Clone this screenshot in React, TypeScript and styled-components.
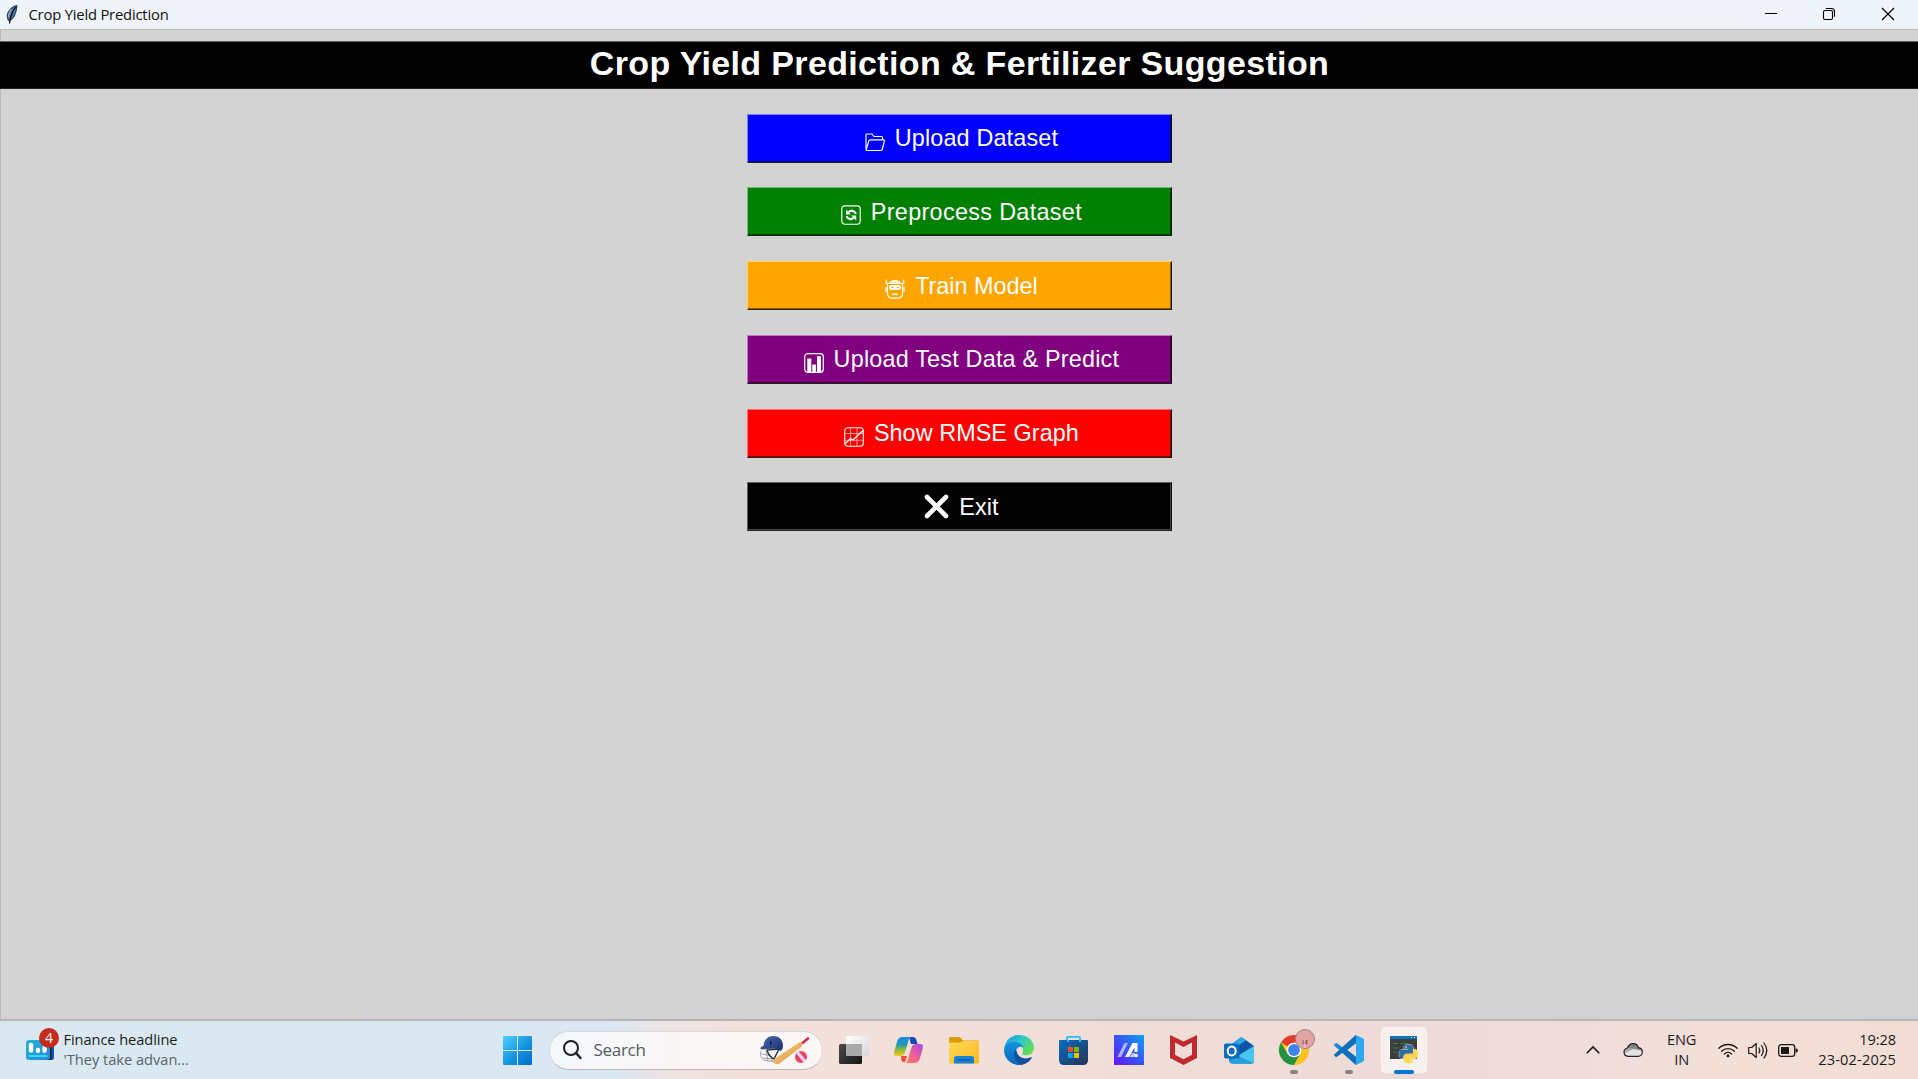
import React from 'react';
import styled, { createGlobalStyle } from 'styled-components';

const GlobalStyle = createGlobalStyle`
  * { box-sizing: border-box; }
  html, body { margin: 0; padding: 0; overflow: hidden; }
  svg { display: block; flex: none; overflow: visible; }
`;

const uiFont = `"Open Sans", "Noto Sans", sans-serif`;
const tkFont = `"Liberation Sans", Arial, sans-serif`;

const Desktop = styled.div`
  width: 1918px;
  height: 1079px;
  display: flex;
  flex-direction: column;
  font-family: ${uiFont};
`;

const TitleBar = styled.header`
  height: 29px;
  flex: none;
  display: flex;
  align-items: center;
  padding-left: 6px;
  background: linear-gradient(90deg, #eff3fa 0%, #eff3f9 60%, #eef3f7 88%, #eff3fa 94%);
`;

const WindowTitle = styled.span`
  margin-left: 10.5px;
  padding-bottom: 1px;
  flex: 1;
  font-size: 14.8px;
  line-height: 20px;
  letter-spacing: -0.2px;
  color: #111;
`;

const CaptionButton = styled.button`
  width: 58.7px;
  height: 29px;
  padding: 0 1px 1px 0;
  border: 0;
  background: transparent;
  display: flex;
  align-items: center;
  justify-content: center;
`;

const Client = styled.main`
  flex: 1;
  min-height: 0;
  display: flex;
  flex-direction: column;
  padding-top: 11px;
  background: #d3d3d3;
  border-top: 1px solid #b9bcc1;
  border-bottom: 2px solid #b7b5b7;
  box-shadow: inset 1px 0 #b9b9b9;
`;

const Heading = styled.h1`
  margin: 0;
  flex: none;
  height: 48px;
  padding: 0 0 3px 1px;
  display: flex;
  align-items: center;
  justify-content: center;
  background: #000;
  border-top: 1px solid #666;
  border-bottom: 1px solid #222;
  color: #fff;
  font: bold 34px/43px ${tkFont};
  letter-spacing: 0.35px;
  white-space: pre;
`;

const ButtonStack = styled.nav`
  display: flex;
  flex-direction: column;
  align-items: center;
  gap: 24.75px;
  padding-top: 24.7px;
`;

const TkButton = styled.button<{ $fill: string; $light: string; $dark: string; $track: number }>`
  width: 425px;
  height: 49px;
  padding: 0 0 0 5px;
  display: flex;
  align-items: center;
  justify-content: center;
  gap: 9.8px;
  background: ${p => p.$fill};
  color: #fff;
  border: 1px solid;
  border-color: ${p => p.$light} #111 #222 ${p => p.$light};
  box-shadow: inset -1px -1px ${p => p.$dark};
  font: 23.4px/30px ${tkFont};
  letter-spacing: ${p => p.$track}px;
  white-space: pre;
`;

const Glyph = styled.span<{ $drop: number }>`
  display: flex;
  padding-top: ${p => p.$drop}px;
`;

const Taskbar = styled.footer`
  height: 58px;
  flex: none;
  display: flex;
  align-items: center;
  background: linear-gradient(90deg, #d9e8f1 0%, #d9e8f1 15%, #dbe8f4 32%, #efe3e2 35%, #f3e1da 39%, #efded7 60%, #eddad8 73%, #f0dcdb 82%, #f3dfd7 89%, #f2ddd5 100%);
`;

const Widget = styled.div`
  width: 490px;
  display: flex;
  align-items: center;
  padding: 0 0 1px 26px;
`;

const WidgetIcon = styled.div`
  position: relative;
  width: 28px;
  height: 20px;
`;

const Badge = styled.span`
  position: absolute;
  left: 13px;
  top: -12px;
  width: 20px;
  height: 20px;
  border-radius: 50%;
  background: #c42b1c;
  color: #fff;
  font-size: 14px;
  line-height: 20px;
  text-align: center;
`;

const WidgetText = styled.div`
  display: flex;
  flex-direction: column;
  margin-left: 9.5px;
  padding-bottom: 1px;
  font-size: 14.6px;
  line-height: 20px;
`;

const Line = styled.span<{ $tone?: string; $track: number }>`
  color: ${p => p.$tone || '#1b1b1b'};
  letter-spacing: ${p => p.$track}px;
  white-space: pre;
`;

const Slot = styled.div`
  position: relative;
  width: 55px;
  height: 58px;
  flex: none;
  display: flex;
  align-items: center;
  justify-content: center;
`;

const ActiveTile = styled.div`
  width: 48px;
  height: 48px;
  display: flex;
  align-items: center;
  justify-content: center;
  border-radius: 5px;
  background: #f8f0ee;
  border: 1px solid #eadfdd;
`;

const Indicator = styled.i<{ $active?: boolean }>`
  position: absolute;
  bottom: 5px;
  left: 50%;
  width: ${p => (p.$active ? 20 : 8)}px;
  height: 4px;
  transform: translateX(-50%);
  border-radius: 2px;
  background: ${p => (p.$active ? '#0078d4' : '#8c807e')};
`;

const SearchBox = styled.div`
  width: 274px;
  height: 39px;
  margin: 0 3.5px;
  padding: 0 13px 0 13px;
  flex: none;
  display: flex;
  align-items: center;
  border-radius: 20px;
  background: linear-gradient(90deg, #f4f8fc, #faf6f6 45%, #fcf7f5);
  border: 1px solid #dcd8da;
  border-bottom-color: #c0b8b8;
`;

const SearchText = styled.span`
  flex: 1;
  margin-left: 12px;
  font-size: 17px;
  line-height: 24px;
  letter-spacing: -0.3px;
  color: #555a5e;
`;

const Tray = styled.div`
  flex: 1;
  display: flex;
  align-items: center;
  justify-content: flex-end;
  padding-right: 22px;
`;

const TrayIcon = styled.span<{ $gap: number }>`
  display: flex;
  margin-right: ${p => p.$gap}px;
`;

const TrayText = styled.div<{ $align: string; $gap?: number }>`
  display: flex;
  flex-direction: column;
  align-items: ${p => p.$align};
  margin-right: ${p => p.$gap || 0}px;
  padding-bottom: 2px;
  font-size: 14.6px;
  line-height: 20px;
`;

const Feather = () => (
  <svg width="12" height="20" viewBox="0 0 12 20">
    <path d="M10.8.7C7 1 2.3 5 1.2 10.5l.8 4 1.3 1.2c4-2 7-6.500 7.5-15z" fill="#4a86cc" stroke="#33383f" strokeWidth="1.200" />
    <path d="M10 2C6.500 5 4.500 9 3.500 18.500M7 6.500 4.500 13" stroke="#111" strokeWidth="1.300" fill="none" />
    <path d="M5 4.500C3.300 7 2.500 9 2.300 12" stroke="#aab4c0" strokeWidth="1.100" fill="none" />
  </svg>
);

const FolderGlyph = () => (
  <svg width="20" height="19" viewBox="0 0 20 19" fill="none" stroke="#fff" strokeWidth="1.150" strokeLinejoin="round">
    <path d="M1 16V2q0-1 1-1h5l2 2.500h7.500q1 0 1 1v2.300" />
    <path d="M5.500 6.800h13.300q.8 0 .6.900l-2 8.300q-.4 1.500-1.800 1.500H2.200Q.9 17.500 1.300 16l2.500-8q.4-1.200 1.700-1.200z" />
  </svg>
);

const RefreshGlyph = () => (
  <svg width="20" height="20" viewBox="0 0 20 20" fill="none" stroke="#fff">
    <rect x=".8" y=".8" width="18.400" height="18.400" rx="3" strokeWidth="1.150" />
    <path d="M7.500 7.300c2-2.300 6-2 7.500 1.500M12.500 12.700c-2 2.300-5.500 1.800-7-1.500" strokeWidth="2.100" />
    <path d="M5 4.500v5h5zM15.200 15.500v-5h-5z" fill="#fff" stroke="none" />
  </svg>
);

const RobotGlyph = () => (
  <svg width="20" height="20" viewBox="0 0 20 20" fill="none" stroke="#fff" strokeWidth="1.200">
    <path d="M1.300.5v4.500M18.700.5v4.500" />
    <path d="M6 2.800q4-3 8 0z" fill="#fff" />
    <path d="M1.300 4.300h17.400" />
    <path d="M2.500 5v9.500q.3 4.700 5 4.700h5q4.700 0 5-4.700V5" />
    <path d="M1 8v5M19 8v5" />
    <rect x="4" y="6" width="12" height="5" rx="2.400" fill="#fff" stroke="none" />
    <path d="M6.300 8.500h2M11.700 8.500h2" stroke="#ffa500" strokeWidth="1.500" />
    <path d="M7.300 15.300h5.400" strokeWidth="1.700" />
  </svg>
);

const BarsGlyph = () => (
  <svg width="20" height="20" viewBox="0 0 20 20">
    <rect x=".7" y=".7" width="18.600" height="18.600" rx="3" fill="none" stroke="#fff" strokeWidth="1.200" />
    <path d="M3.300 19V5.500h4V19zM8.300 19v-7.500h3.600V19zM13 19V3.300h4V19z" fill="#fff" />
  </svg>
);

const GraphGlyph = () => (
  <svg width="20" height="20" viewBox="0 0 20 20" fill="none" stroke="#fff">
    <rect x=".7" y=".7" width="18.600" height="18.600" rx="3" strokeWidth="1.100" />
    <path d="M6.500 1v18M13 1v18M1 6.500h18M1 13.300h18" strokeWidth=".8" opacity=".7" />
    <path d="M1.500 16.500 6.500 11.500l2.500 1.500 10-9.500" strokeWidth="1.300" />
  </svg>
);

const CrossGlyph = () => (
  <svg width="25" height="25" viewBox="0 0 25 25" stroke="#fff" strokeWidth="4.600" strokeLinecap="round">
    <path d="M3 3l19 19M22 3 3 22" />
  </svg>
);

const actions = [
  { label: 'Upload Dataset', fill: '#0000ff', light: '#7f7fff', dark: '#00008c', drop: 8, track: 0.15, Icon: FolderGlyph },
  { label: 'Preprocess Dataset', fill: '#008000', light: '#72bb78', dark: '#004600', drop: 7, track: 0.32, Icon: RefreshGlyph },
  { label: 'Train Model', fill: '#ffa500', light: '#ffd45e', dark: '#8c5a00', drop: 7, track: -0.02, Icon: RobotGlyph },
  { label: 'Upload Test Data & Predict', fill: '#800080', light: '#bd75bd', dark: '#460046', drop: 7, track: 0.2, Icon: BarsGlyph },
  { label: 'Show RMSE Graph', fill: '#ff0000', light: '#ff6f6f', dark: '#8c0000', drop: 7, track: 0.06, Icon: GraphGlyph },
  { label: 'Exit', fill: '#000000', light: '#606060', dark: '#444444', drop: 0, track: 0.1, Icon: CrossGlyph },
];

const WidgetChart = () => (
  <svg width="28" height="20" viewBox="0 0 28 20">
    <defs>
      <linearGradient id="wg" x1="0" y1="0" x2="1" y2="1"><stop stopColor="#23b5cf" /><stop offset="1" stopColor="#2b84dc" /></linearGradient>
    </defs>
    <rect x="18" width="10" height="20" rx="2.500" fill="#1458a8" />
    <rect x="23.500" y="6" width="2" height="14" fill="#07203e" />
    <rect width="24" height="20" rx="3" fill="url(#wg)" />
    <path d="M5 5v5.500M12 10v.8M18.500 8v2.800" stroke="#fff" strokeWidth="4.400" strokeLinecap="round" />
    <path d="M3.500 16h17" stroke="#25dcf5" strokeWidth="2" strokeLinecap="round" />
  </svg>
);

const WindowsLogo = () => (
  <svg width="29" height="29" viewBox="0 0 29 29">
    <defs>
      <linearGradient id="win" x1="0" y1="0" x2="1" y2="1"><stop stopColor="#4fd0fb" /><stop offset=".55" stopColor="#1594dd" /><stop offset="1" stopColor="#0069c8" /></linearGradient>
    </defs>
    <path d="M1 0h13v14H0V1q0-1 1-1zM15 0h13q1 0 1 1v13H15zM0 15h14v14H1q-1 0-1-1zM15 15h14v13q0 1-1 1H15z" fill="url(#win)" />
  </svg>
);

const Magnifier = () => (
  <svg width="19" height="20" viewBox="0 0 19 20" fill="none" stroke="#1f1f1f" strokeLinecap="round">
    <circle cx="8" cy="8" r="7" strokeWidth="2" />
    <path d="M13 13l4.500 5" strokeWidth="2.500" />
  </svg>
);

const CricketArt = () => (
  <svg width="50" height="30" viewBox="0 0 50 30">
    <defs>
      <linearGradient id="bat" x1="0" y1="0" x2="1" y2="1"><stop stopColor="#f8c98a" /><stop offset="1" stopColor="#e39a3f" /></linearGradient>
      <linearGradient id="helm" x1="0" y1="0" x2="1" y2="1"><stop stopColor="#4c6cb0" /><stop offset="1" stopColor="#172f70" /></linearGradient>
    </defs>
    <path d="M2 16c-1 4 0 8 4 9.500l9 1M3 19l10 2M4 23l11 1M7 15l2 11M12 14l1 12" stroke="#9a9fa6" strokeWidth="1" fill="none" />
    <path d="M8 15q2 7 7 9l5-10z" fill="#eceef1" stroke="#252a33" strokeWidth="1.300" />
    <path d="M4.500 11C5 4 9.500 1 14.500 1 20 1 24 5 24 10.500c0 3-1 5-2.500 5.500C17 12.500 10 14 2.500 14.500.5 13.800 1 12 4.500 11z" fill="url(#helm)" />
    <path d="M12 6q-1 2 0 4" stroke="#0b1430" strokeWidth="1.500" fill="none" />
    <path d="M43.500 8 49 3.500" stroke="#d72846" strokeWidth="2.600" strokeLinecap="round" />
    <path d="M14.500 24.500 39 8.200q3-2 4.500.3 0 2.500-2 4L20 29q-3.500 1-5.500-1.500-1-2 0-3z" fill="url(#bat)" />
    <circle cx="42" cy="22" r="6" fill="#f04363" />
    <path d="m38.500 17.500 7.500 9" stroke="#ead7f6" strokeWidth="3.200" />
  </svg>
);

const TaskView = () => (
  <svg width="30" height="28" viewBox="0 0 30 28">
    <defs>
      <linearGradient id="tvd" x1="0" y1="0" x2="1" y2="1"><stop stopColor="#4a4a4a" /><stop offset="1" stopColor="#151515" /></linearGradient>
      <linearGradient id="tvl" x1="0" y1="0" x2="1" y2="1"><stop stopColor="#fff" /><stop offset="1" stopColor="#d8d5d5" /></linearGradient>
    </defs>
    <rect x="7" width="23" height="20" rx="1.500" fill="url(#tvl)" />
    <rect y="8" width="23" height="20" rx="1.500" fill="url(#tvd)" />
    <path d="M7 8h16v12H8q-1 0-1-1z" fill="#aaa" />
  </svg>
);

const Copilot = () => (
  <svg width="29" height="26" viewBox="0 0 29 26">
    <defs>
      <linearGradient id="cpa" x1="0" y1="0" x2="0" y2="1"><stop stopColor="#1a8be0" /><stop offset=".4" stopColor="#1c9cb5" /><stop offset=".65" stopColor="#88b83c" /><stop offset="1" stopColor="#f2cb22" /></linearGradient>
      <linearGradient id="cpb" x1="1" y1="0" x2="0" y2="1"><stop stopColor="#a04cf0" /><stop offset=".5" stopColor="#ef5a97" /><stop offset="1" stopColor="#f9874e" /></linearGradient>
    </defs>
    <path d="M15 0h4q2.500 0 3.200 2.500L23.500 7H17z" fill="#1845b8" />
    <path d="M7 19h6l-2 6H9.500Q8 25 7.300 22.500z" fill="#ee4d32" />
    <path d="M8.500 0h9q-2 0-3 3.500L11 15.500Q10 19 7 19H3Q-1 19 .3 14.500L3.300 4Q4.500 0 8.500 0z" fill="url(#cpa)" />
    <path d="M22 7h4q4 0 2.700 4.500L25.700 22q-1.200 4-5.200 4H10q3 0 4-3.500l3.500-12Q18.500 7 22 7z" fill="url(#cpb)" />
  </svg>
);

const Explorer = () => (
  <svg width="30" height="27" viewBox="0 0 30 27">
    <defs>
      <linearGradient id="fld" x1="0" y1="0" x2="1" y2="1"><stop stopColor="#ffd95a" /><stop offset="1" stopColor="#fbb91c" /></linearGradient>
    </defs>
    <path d="M0 1.500Q0 0 1.500 0h8q1.200 0 2 .8L14 3.500h14.500Q30 3.500 30 5v4H0z" fill="#dc9b08" />
    <path d="M0 5.500h11l3-1.500h16v21.500q0 1-1 1H1q-1 0-1-1z" fill="url(#fld)" />
    <path d="M5 26.500v-5Q5 19 7.500 19h15q2.500 0 2.500 2.500v5z" fill="#1580d4" />
    <path d="M8.500 22.800h13" stroke="#0a5596" strokeWidth="1.300" />
  </svg>
);

const Edge = () => (
  <svg width="30" height="30" viewBox="0 0 30 30">
    <defs>
      <linearGradient id="eg" x1="0" y1="0" x2="1" y2=".6"><stop stopColor="#1798d8" /><stop offset=".5" stopColor="#2fc4cf" /><stop offset="1" stopColor="#62e053" /></linearGradient>
      <linearGradient id="eb" x1="0" y1="0" x2="0" y2="1"><stop stopColor="#1593dd" /><stop offset="1" stopColor="#0b66c0" /></linearGradient>
    </defs>
    <path d="M.3 13C1.500 5 7.500 0 15 0c8.500 0 15 6 15 12.800 0 4.500-3.300 7.400-7.300 7.400-3.700 0-5-1.200-4.200-2.500C20.500 14 18 9 11 9 6 9 2 11 .3 13z" fill="url(#eg)" />
    <path d="M0 15.500C0 10 5.500 6.800 10.500 6.800c6 0 9 4 8.800 6.200-1.500-1.800-4-1.700-5.800 0-3 3-2.500 9 2 12.500L19 29.500A15 15 0 0 1 0 15.500z" fill="url(#eb)" />
    <path d="M11.500 14.500C8.500 19 10.500 27.500 18 29.700c4.500-.8 8-3.700 9.700-6.700.3-.7-.2-1-.8-.7-5.900 2.800-13.400.2-14.200-6.300z" fill="#10509c" />
  </svg>
);

const Store = () => (
  <svg width="29" height="29" viewBox="0 0 29 29">
    <defs>
      <linearGradient id="st" x1="0" y1="0" x2="1" y2="1"><stop stopColor="#0a6fc0" /><stop offset="1" stopColor="#253157" /></linearGradient>
    </defs>
    <path d="M8 6V2q0-1.200 1.200-1.200h10.600Q21 .8 21 2v4" fill="none" stroke="#28bdf0" strokeWidth="1.800" />
    <path d="M0 5q0-1 1-1h27q1 0 1 1v19q0 5-5 5H5q-5 0-5-5z" fill="url(#st)" />
    <path d="M8 4h2v2H8zM20 4h2v2h-2z" fill="#28bdf0" />
    <path d="M9 11h5v5H9z" fill="#f25022" /><path d="M15 11h5v5h-5z" fill="#7fba00" />
    <path d="M9 17h5v5H9z" fill="#00a4ef" /><path d="M15 17h5v5h-5z" fill="#ffb900" />
  </svg>
);

const MyAsus = () => (
  <svg width="30" height="30" viewBox="0 0 30 30">
    <defs>
      <linearGradient id="ma" x1="1" y1="0" x2="0" y2="1"><stop stopColor="#0ea2fb" /><stop offset=".5" stopColor="#3555f5" /><stop offset="1" stopColor="#6a14fb" /></linearGradient>
    </defs>
    <path d="M0 0h30v30H0z" fill="url(#ma)" />
    <path d="M3.500 22 10.500 8H14L7 22z" fill="#aab8ff" />
    <path d="M11 22 18.500 8h5v9h-3v-4.500L15 22z" fill="#fff" />
    <path d="M15.500 22l2.500-4h3v4z" fill="#b9c6ff" />
    <circle cx="22.300" cy="20.500" r="1.700" fill="#fff" />
  </svg>
);

const McAfee = () => (
  <svg width="27" height="30" viewBox="0 0 27 30">
    <path d="M0 0 13.500 6.500 27 0v23l-13.500 7L0 23z" fill="#c02b2f" />
    <path d="M5 7.500 13.500 12 22 7.500v12.300l-8.500 4.400L5 19.800z" fill="#efdcd7" />
  </svg>
);

const Outlook = () => (
  <svg width="30" height="27" viewBox="0 0 30 27">
    <path d="M5 9 16 .7q1.300-1 2.600 0L30 9v14q0 3.500-3.500 3.500H9Q5 26.500 5 23z" fill="#1482d2" />
    <path d="M6 8.500 16 1q1.300-1 2.600 0L22 3.500 8 13z" fill="#32a4ea" />
    <path d="M8 13 22 3.500l7 5L14 19z" fill="#0c53a5" />
    <path d="M30 9.500V23q0 3.500-3.500 3.500H9l5-8z" fill="#49c6f0" />
    <path d="M14 19 30 26q-1.500.8-3.500.8H9Q6 26.500 5.500 24z" fill="#25a0dc" />
    <rect y="6.500" width="15.500" height="15" rx="1.800" fill="#0f6cbd" />
    <ellipse cx="7.700" cy="14" rx="4" ry="4.500" fill="none" stroke="#fff" strokeWidth="2" />
  </svg>
);

const Chrome = () => (
  <svg width="30" height="30" viewBox="0 0 30 30">
    <circle cx="15" cy="15" r="15" fill="#ffcb22" />
    <path d="M15 15 2 7.500A15 15 0 0 1 28 7.500H15z" fill="#e33b2e" />
    <path d="M2 7.500A15 15 0 0 0 15 30l6.500-11.200L15 15 8.500 18.800z" fill="#229342" />
    <path d="M15 7.500h13A15 15 0 0 1 15 30l6.500-11.200z" fill="#fcc31e" />
    <circle cx="15" cy="15" r="7.300" fill="#fff" />
    <circle cx="15" cy="15" r="5.900" fill="#4082ed" />
    <circle cx="26" cy="4" r="9.500" fill="#e7a3a0" stroke="#8f8583" strokeWidth="1" />
    <path d="M17.500 1Q26-7 34.500 1z" fill="#dca89f" />
    <path d="M23.500 10V5h1.200v4zM26 8.500l.8-3.500h2L28 9.500l-1.500 1z" fill="#8d6676" />
    <path d="M25.300 9h1.700v4h-1.700z" fill="#cfc3ee" />
  </svg>
);

const VsCode = () => (
  <svg width="30" height="30" viewBox="0 0 30 30">
    <path d="M22 0 8.500 12.300 3 8.200q-.8-.5-1.500 0L.4 9.300q-.7.800 0 1.500L22 30z" fill="#1a8ad6" />
    <path d="M22 30 8.500 17.700 3 21.800q-.8.500-1.500 0L.4 20.700q-.7-.8 0-1.500L22 0z" fill="#0f6fb8" />
    <path d="M22 8.200 13.300 15 22 21.800z" fill="#efdcd9" />
    <path d="M22 0 28.800 3.200Q30 3.800 30 5v20q0 1.200-1.200 1.800L22 30z" fill="#2fa8f2" />
  </svg>
);

const PythonConsole = () => (
  <svg width="28" height="28" viewBox="0 0 28 28">
    <path d="M0 0h27v23H0z" fill="#3b3d3e" />
    <path d="M0 0h27v3H0z" fill="#1470ac" />
    <path d="M21 1.500h1M24 1.500h1" stroke="#cfe3f1" strokeWidth="1" />
    <path d="M3 7.500h5M10 7.500h8M3 12h6M3 16.500h5" stroke="#3c7a44" strokeWidth="1.200" />
    <g transform="translate(9.300 8.700) scale(.77)" stroke="#f1ece8" strokeWidth="1.200" paintOrder="stroke">
      <path fill="#2f6c9e" d="M14.250.18l.9.2.73.26.59.3.45.32.34.34.25.34.16.33.1.3.04.26.02.2-.01.13V8.500l-.05.63-.13.55-.21.46-.26.38-.3.31-.33.25-.35.19-.35.14-.33.1-.3.07-.26.04-.21.02H8.770l-.69.05-.59.14-.5.22-.41.27-.33.32-.27.35-.2.36-.15.37-.1.35-.07.32-.04.27-.02.21v3.060H3.170l-.21-.03-.28-.07-.32-.12-.35-.18-.36-.26-.36-.36-.35-.46-.32-.59-.28-.73-.21-.88-.14-1.050-.05-1.230.06-1.220.16-1.040.24-.87.32-.71.36-.57.4-.44.42-.33.42-.24.4-.16.36-.1.32-.05.24-.01h.16l.06.01h8.160v-.83H6.180l-.01-2.750-.02-.37.05-.34.11-.31.17-.28.25-.26.31-.23.38-.2.44-.18.51-.15.58-.12.64-.1.71-.06.77-.04.84-.02 1.270.05z" />
      <path fill="#ffd845" d="M21.040 6.110l.28.06.32.12.35.18.36.27.36.35.35.47.32.59.28.73.21.88.14 1.040.05 1.230-.06 1.230-.16 1.040-.24.86-.32.71-.36.57-.4.45-.42.33-.42.24-.4.16-.36.09-.32.05-.24.02-.16-.01h-8.220v.82h5.840l.01 2.760.02.36-.05.34-.11.31-.17.29-.25.25-.31.24-.38.2-.44.17-.51.15-.58.13-.64.09-.71.07-.77.04-.84.01-1.270-.04-1.070-.14-.9-.2-.73-.25-.59-.3-.45-.33-.34-.34-.25-.34-.16-.33-.1-.3-.04-.25-.02-.2.01-.13v-5.340l.05-.64.13-.54.21-.46.26-.38.3-.32.33-.24.35-.2.35-.14.33-.1.3-.06.26-.04.21-.02.13-.01h5.840l.69-.05.59-.14.5-.21.41-.28.33-.32.27-.35.2-.36.15-.36.1-.35.07-.32.04-.28.02-.21V6.070h2.090l.14.01z" />
      <circle cx="8.700" cy="2.900" r="1" fill="#fff" stroke="none" />
      <circle cx="15.400" cy="20.900" r="1" fill="#fff" stroke="none" />
    </g>
  </svg>
);

const pinned = [
  { name: 'taskview', Icon: TaskView },
  { name: 'copilot', Icon: Copilot },
  { name: 'explorer', Icon: Explorer },
  { name: 'edge', Icon: Edge },
  { name: 'store', Icon: Store },
  { name: 'myasus', Icon: MyAsus },
  { name: 'mcafee', Icon: McAfee },
  { name: 'outlook', Icon: Outlook },
  { name: 'chrome', Icon: Chrome, running: true },
  { name: 'vscode', Icon: VsCode, running: true },
];

const Chevron = () => (
  <svg width="14" height="8" viewBox="0 0 14 8" fill="none" stroke="#1b1b1b" strokeWidth="1.600"><path d="M.7 7.300 7 1l6.300 6.300" /></svg>
);

const Cloud = () => (
  <svg width="20" height="14" viewBox="0 0 20 14">
    <path d="M5 13.300a4.200 4.200 0 0 1-.6-8.300C6 1.500 8 .7 10 .7c2.700 0 4.700 1.600 5.300 4 2.500.3 4 2 4 4.200 0 2.500-1.900 4.400-4.300 4.400z" fill="#e4e2e2" />
    <path d="M1 10.500 11 6 4.500 4.800C2 5 .3 7.500 1 10.500z" fill="#aaa" />
    <path d="M4.500 4.800C6 1.500 8 .7 10 .7c2.700 0 4.700 1.600 5.300 4 2 .3 3.500 1.500 3.900 3L11 6z" fill="#858585" />
    <path d="M5 13.300a4.200 4.200 0 0 1-.6-8.300C6 1.500 8 .7 10 .7c2.700 0 4.700 1.600 5.300 4 2.500.3 4 2 4 4.200 0 2.500-1.900 4.400-4.300 4.400z" fill="none" stroke="#222" strokeWidth="1.200" />
  </svg>
);

const Wifi = () => (
  <svg width="20" height="15" viewBox="0 0 20 15" fill="none" stroke="#1b1b1b" strokeWidth="1.300" strokeLinecap="round">
    <path d="M.8 5.300a13 13 0 0 1 18.400 0M3.600 8.200a9 9 0 0 1 12.800 0M6.400 11a5 5 0 0 1 7.200 0" />
    <circle cx="10" cy="13" r="1.400" fill="#1b1b1b" stroke="none" />
  </svg>
);

const Speaker = () => (
  <svg width="20" height="17" viewBox="0 0 20 17" fill="none" stroke="#1b1b1b" strokeWidth="1.200" strokeLinecap="round" strokeLinejoin="round">
    <path d="M.7 5.500h3L8.200 1.500v14L3.700 11.500h-3z" />
    <path d="M11 6q1.500 2.500 0 5M13.500 3.500q3.500 5 0 10M16 1q5.500 7.500 0 15" />
  </svg>
);

const Battery = () => (
  <svg width="20" height="13" viewBox="0 0 20 13">
    <rect x=".7" y=".7" width="16" height="11.600" rx="2.500" fill="none" stroke="#1b1b1b" strokeWidth="1.300" />
    <rect x="3" y="3" width="8" height="7" fill="#1b1b1b" />
    <path d="M17.500 4.500h1q1.500.5 1.500 2t-1.500 2h-1z" fill="#1b1b1b" />
  </svg>
);

export default function App() {
  return (
    <Desktop>
      <GlobalStyle />
      <TitleBar>
        <Feather />
        <WindowTitle>Crop Yield Prediction</WindowTitle>
        <CaptionButton aria-label="Minimize">
          <svg width="12" height="12" viewBox="0 0 12 12"><path d="M0 5.500h12" stroke="#000" /></svg>
        </CaptionButton>
        <CaptionButton aria-label="Restore">
          <svg width="12" height="12" viewBox="0 0 12 12" fill="none" stroke="#000" strokeWidth="1.100">
            <rect x=".5" y="2.500" width="9" height="9" rx="1.500" />
            <path d="M2.800.5h5.700q3 0 3 3v5.200" />
          </svg>
        </CaptionButton>
        <CaptionButton aria-label="Close">
          <svg width="12" height="12" viewBox="0 0 12 12"><path d="m0 0 12 12M12 0 0 12" stroke="#000" strokeWidth="1.200" /></svg>
        </CaptionButton>
      </TitleBar>
      <Client>
        <Heading>Crop Yield Prediction &amp; Fertilizer Suggestion</Heading>
        <ButtonStack>
          {actions.map(({ label, fill, light, dark, drop, track, Icon }) => (
            <TkButton key={label} $fill={fill} $light={light} $dark={dark} $track={track}>
              <Glyph $drop={drop}><Icon /></Glyph>
              {label}
            </TkButton>
          ))}
        </ButtonStack>
      </Client>
      <Taskbar>
        <Widget>
          <WidgetIcon>
            <WidgetChart />
            <Badge>4</Badge>
          </WidgetIcon>
          <WidgetText>
            <Line $track={-0.06}>Finance headline</Line>
            <Line $track={0} $tone="#5b646a">'They take advan...</Line>
          </WidgetText>
        </Widget>
        <Slot><WindowsLogo /></Slot>
        <SearchBox>
          <Magnifier />
          <SearchText>Search</SearchText>
          <CricketArt />
        </SearchBox>
        {pinned.map(({ name, Icon, running }) => (
          <Slot key={name}>
            <Icon />
            {running && <Indicator />}
          </Slot>
        ))}
        <Slot>
          <ActiveTile><PythonConsole /></ActiveTile>
          <Indicator $active />
        </Slot>
        <Tray>
          <TrayIcon $gap={23}><Chevron /></TrayIcon>
          <TrayIcon $gap={24}><Cloud /></TrayIcon>
          <TrayText $align="center" $gap={22}>
            <Line $track={-0.2}>ENG</Line>
            <Line $track={-0.2}>IN</Line>
          </TrayText>
          <TrayIcon $gap={10}><Wifi /></TrayIcon>
          <TrayIcon $gap={10}><Speaker /></TrayIcon>
          <TrayIcon $gap={20}><Battery /></TrayIcon>
          <TrayText $align="flex-end">
            <Line $track={-0.1}>19:28</Line>
            <Line $track={0.17}>23-02-2025</Line>
          </TrayText>
        </Tray>
      </Taskbar>
    </Desktop>
  );
}
